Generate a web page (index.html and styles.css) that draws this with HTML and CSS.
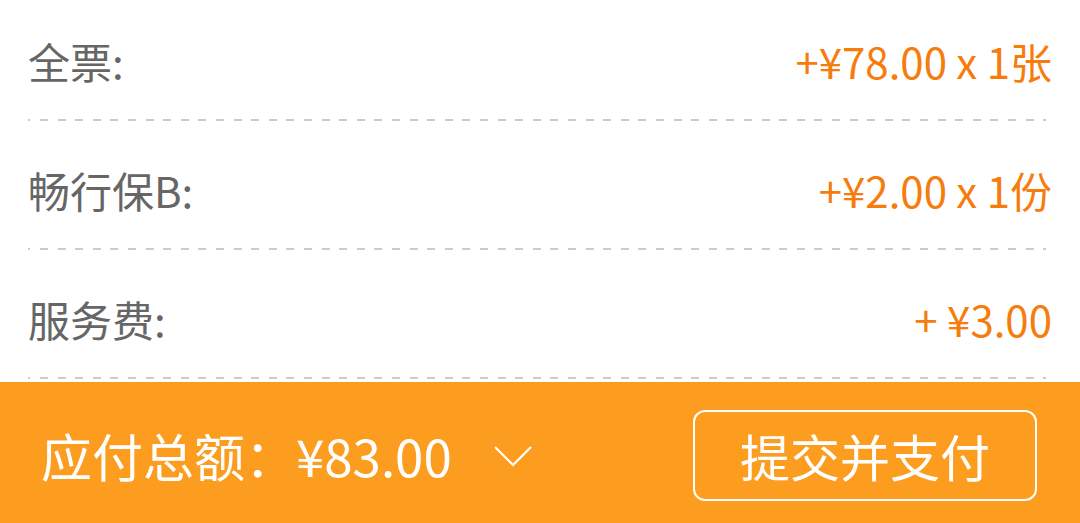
FILE: index.html
```html
<!DOCTYPE html>
<html lang="zh-CN">
<head>
    <meta charset="UTF-8">
    <meta name="viewport" content="width=device-width, initial-scale=1.0">
    <title>订单确认</title>
    <link rel="stylesheet" href="styles.css">
</head>
<body>
    <div class="detail">
        <div class="row">
            <span class="label">全票:</span>
            <span class="value">+¥78.00 x 1张</span>
        </div>
        <div class="row">
            <span class="label">畅行保B:</span>
            <span class="value">+¥2.00 x 1份</span>
        </div>
        <div class="row">
            <span class="label">服务费:</span>
            <span class="value">+ ¥3.00</span>
        </div>
    </div>

    <div class="bar">
        <div class="total">
            <span>应付总额：¥83.00</span>
            <svg class="arrow" width="38" height="21" viewBox="0 0 38 21">
                <polyline points="1,1 19,19 37,1" fill="none" stroke="#fff" stroke-width="2.2"/>
            </svg>
        </div>
        <button class="btn-pay">提交并支付</button>
    </div>
</body>
</html>
```

FILE: styles.css
```css
body {
    margin: 0;
    height: 523px;
    display: flex;
    flex-direction: column;
    font-family: "Noto Sans CJK SC", "Noto Sans", sans-serif;
    background: #fff;
    overflow: hidden;
}
.detail {
    flex: 1;
    overflow: hidden;
}
.row {
    display: flex;
    justify-content: space-between;
    align-items: center;
    margin: 0 28px;
    padding: 44px 0 37px;
    height: 48px;
    font-size: 42px;
    background: repeating-linear-gradient(to right, #cbcbcb 0 8px, transparent 8px 17.6px) -5.6px bottom / 100% 2px no-repeat;
}
.row:first-child {
    padding-top: 36px;
}
.label {
    color: #666;
}
.value {
    color: #f67c0e;
}
.bar {
    height: 141px;
    box-sizing: border-box;
    background: #fd9d1f;
    display: flex;
    justify-content: space-between;
    align-items: center;
    padding: 5px 43px 0 41px;
    color: #fff;
}
.total {
    display: flex;
    align-items: center;
    font-size: 51px;
}
.arrow {
    margin-left: 42px;
    margin-top: 2px;
}
.btn-pay {
    width: 344px;
    height: 91px;
    border: 2px solid #fff;
    border-radius: 12px;
    background: transparent;
    color: #fff;
    font-family: inherit;
    font-size: 50px;
    padding: 0;
    cursor: pointer;
}
```
